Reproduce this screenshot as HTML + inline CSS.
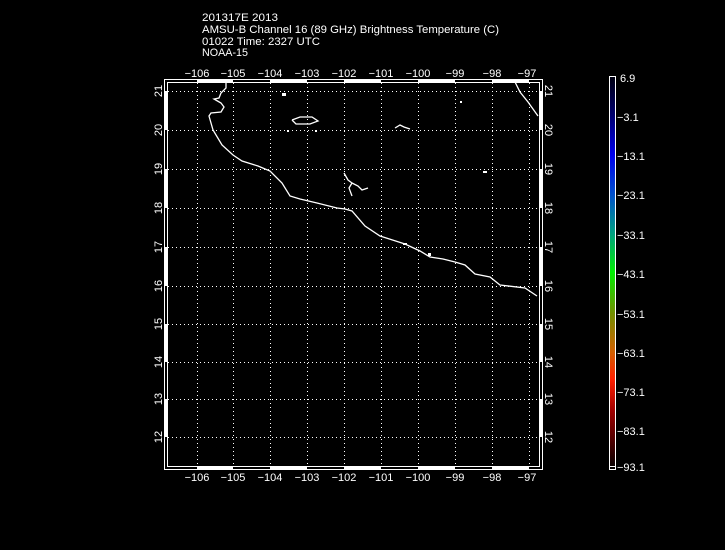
<!DOCTYPE html>
<html><head><style>
html,body{margin:0;padding:0;background:#000;width:725px;height:550px;overflow:hidden}
svg{display:block}
text{font-family:"Liberation Sans",sans-serif;font-size:11px;fill:#fff}
</style></head><body>
<svg width="725" height="550" viewBox="0 0 725 550">
<defs>
<linearGradient id="g" x1="0" y1="0" x2="0" y2="1">
<stop offset="0" stop-color="#000010"/>
<stop offset="0.1" stop-color="#000070"/>
<stop offset="0.2" stop-color="#0000ee"/>
<stop offset="0.3" stop-color="#0050cc"/>
<stop offset="0.4" stop-color="#00a080"/>
<stop offset="0.5" stop-color="#00ee00"/>
<stop offset="0.6" stop-color="#709000"/>
<stop offset="0.7" stop-color="#d06000"/>
<stop offset="0.77" stop-color="#ff2000"/>
<stop offset="0.85" stop-color="#a00000"/>
<stop offset="1" stop-color="#000000"/>
</linearGradient>
</defs>
<text x="202" y="21" textLength="76" lengthAdjust="spacingAndGlyphs">201317E 2013</text>
<text x="202" y="33" textLength="297" lengthAdjust="spacingAndGlyphs">AMSU-B Channel 16 (89 GHz) Brightness Temperature (C)</text>
<text x="202" y="45" textLength="118" lengthAdjust="spacingAndGlyphs">01022 Time: 2327 UTC</text>
<text x="202" y="56" textLength="46" lengthAdjust="spacingAndGlyphs">NOAA-15</text>

<g fill="none" stroke="#fff">
<rect x="164.5" y="79.5" width="378" height="390" stroke-width="1"/>
<rect x="167.5" y="82.5" width="372" height="384" stroke-width="1"/>
</g>
<g stroke="#fff" stroke-width="3">
<line x1="197" y1="81" x2="233" y2="81"/><line x1="270" y1="81" x2="307" y2="81"/><line x1="344" y1="81" x2="381" y2="81"/><line x1="418" y1="81" x2="455" y2="81"/><line x1="492" y1="81" x2="529" y2="81"/>
<line x1="197" y1="468" x2="233" y2="468"/><line x1="270" y1="468" x2="307" y2="468"/><line x1="344" y1="468" x2="381" y2="468"/><line x1="418" y1="468" x2="455" y2="468"/><line x1="492" y1="468" x2="529" y2="468"/>
<line x1="166" y1="91" x2="166" y2="130"/><line x1="166" y1="169" x2="166" y2="208"/><line x1="166" y1="247" x2="166" y2="286"/><line x1="166" y1="324" x2="166" y2="362"/><line x1="166" y1="399" x2="166" y2="437"/>
<line x1="541" y1="91" x2="541" y2="130"/><line x1="541" y1="169" x2="541" y2="208"/><line x1="541" y1="247" x2="541" y2="286"/><line x1="541" y1="324" x2="541" y2="362"/><line x1="541" y1="399" x2="541" y2="437"/>
</g>
<g stroke="#fff" stroke-width="1" stroke-dasharray="1,3">
<line x1="197.5" y1="83" x2="197.5" y2="466"/><line x1="233.5" y1="83" x2="233.5" y2="466"/><line x1="270.5" y1="83" x2="270.5" y2="466"/><line x1="307.5" y1="83" x2="307.5" y2="466"/><line x1="344.5" y1="83" x2="344.5" y2="466"/><line x1="381.5" y1="83" x2="381.5" y2="466"/><line x1="418.5" y1="83" x2="418.5" y2="466"/><line x1="455.5" y1="83" x2="455.5" y2="466"/><line x1="492.5" y1="83" x2="492.5" y2="466"/><line x1="529.5" y1="83" x2="529.5" y2="466"/>
<line x1="168" y1="91.5" x2="539" y2="91.5"/><line x1="168" y1="130.5" x2="539" y2="130.5"/><line x1="168" y1="169.5" x2="539" y2="169.5"/><line x1="168" y1="208.5" x2="539" y2="208.5"/><line x1="168" y1="247.5" x2="539" y2="247.5"/><line x1="168" y1="286.5" x2="539" y2="286.5"/><line x1="168" y1="324.5" x2="539" y2="324.5"/><line x1="168" y1="362.5" x2="539" y2="362.5"/><line x1="168" y1="399.5" x2="539" y2="399.5"/><line x1="168" y1="437.5" x2="539" y2="437.5"/>
</g>
<g fill="none" stroke="#fff" stroke-width="1.3">
<polyline points="226,82 226,88 221,93 219,98 214,99 221,103 224,107 221,112 211,113 209,116 213,130 222,145 233,155 242,161 258,166 270,171 282,183 290,196 300,199 317,203 337,208 345,209 352,211 365,226 380,236 405,244 420,251 430,257 443,259 455,262 465,265 475,274 490,277 500,285 525,288 537,296"/>
<polyline points="515,82 520,92 528,102 538,116"/>
<polyline points="292,120 300,117 312,117 318,121 310,124 296,124 292,120"/>
<polyline points="344,173 348,180 352,183 349,188 352,196"/>
<polyline points="352,183 358,186 362,190 368,188"/>
<polyline points="395,128 400,125 404,127 410,129"/>
</g>
<g fill="#fff">
<rect x="282" y="93" width="4" height="3"/><rect x="460" y="101" width="2" height="2"/><rect x="483" y="171" width="4" height="2"/>
<rect x="287" y="130" width="2" height="2"/><rect x="315" y="130" width="2" height="2"/><rect x="403" y="243" width="4" height="2"/><rect x="428" y="253" width="3" height="3"/>
</g>
<g text-anchor="middle">
<text x="197" y="77">−106</text><text x="233" y="77">−105</text><text x="270" y="77">−104</text><text x="307" y="77">−103</text><text x="344" y="77">−102</text><text x="381" y="77">−101</text><text x="418" y="77">−100</text><text x="455" y="77">−99</text><text x="492" y="77">−98</text><text x="527" y="77">−97</text>
<text x="197" y="481">−106</text><text x="233" y="481">−105</text><text x="270" y="481">−104</text><text x="307" y="481">−103</text><text x="344" y="481">−102</text><text x="381" y="481">−101</text><text x="418" y="481">−100</text><text x="455" y="481">−99</text><text x="492" y="481">−98</text><text x="527" y="481">−97</text>
</g>
<g text-anchor="middle">
<text transform="translate(162,91) rotate(-90)">21</text><text transform="translate(162,130) rotate(-90)">20</text><text transform="translate(162,169) rotate(-90)">19</text><text transform="translate(162,208) rotate(-90)">18</text><text transform="translate(162,247) rotate(-90)">17</text><text transform="translate(162,286) rotate(-90)">16</text><text transform="translate(162,324) rotate(-90)">15</text><text transform="translate(162,362) rotate(-90)">14</text><text transform="translate(162,399) rotate(-90)">13</text><text transform="translate(162,437) rotate(-90)">12</text>
<text transform="translate(545,91) rotate(90)">21</text><text transform="translate(545,130) rotate(90)">20</text><text transform="translate(545,169) rotate(90)">19</text><text transform="translate(545,208) rotate(90)">18</text><text transform="translate(545,247) rotate(90)">17</text><text transform="translate(545,286) rotate(90)">16</text><text transform="translate(545,324) rotate(90)">15</text><text transform="translate(545,362) rotate(90)">14</text><text transform="translate(545,399) rotate(90)">13</text><text transform="translate(545,437) rotate(90)">12</text>
</g>
<rect x="609.5" y="76.5" width="6" height="393" fill="url(#g)" stroke="#fff"/>
<line x1="609" y1="466.5" x2="616" y2="466.5" stroke="#fff"/>
<g>
<text x="620" y="82">6.9</text><text x="617" y="121">−3.1</text><text x="617" y="160">−13.1</text><text x="617" y="199">−23.1</text><text x="617" y="239">−33.1</text><text x="617" y="278">−43.1</text><text x="617" y="318">−53.1</text><text x="617" y="357">−63.1</text><text x="617" y="396">−73.1</text><text x="617" y="435">−83.1</text><text x="617" y="471">−93.1</text>
</g>
</svg>
</body></html>
